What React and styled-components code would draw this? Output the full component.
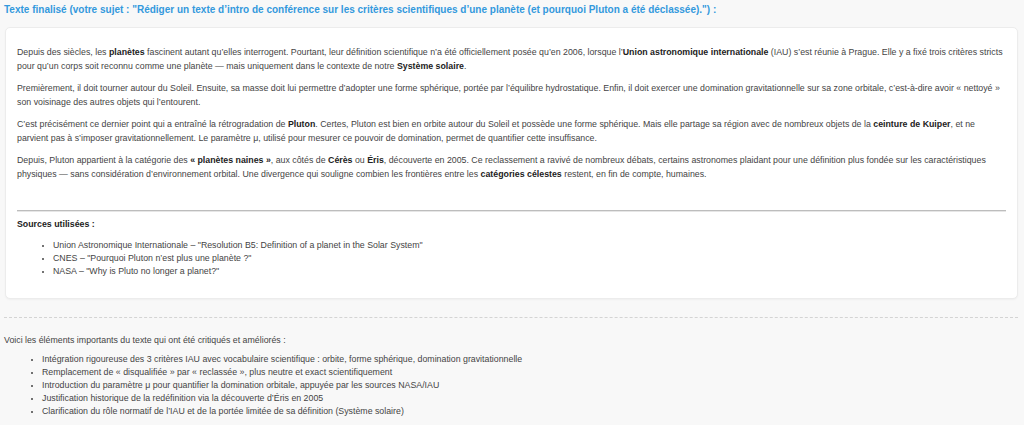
import React from 'react'
import styled, { createGlobalStyle } from 'styled-components'

const GlobalStyle = createGlobalStyle`
  body {
    margin: 0;
    background: #f8f8f8;
    font-family: "Liberation Sans", Arial, sans-serif;
    color: #444;
  }
`

const Page = styled.div`
  padding: 2px 6px 0 4px;
  font-size: 8.8px;
  line-height: 13.5px;
`

const Title = styled.h2`
  margin: 0 0 10px 0;
  font-size: 10px;
  line-height: 15px;
  font-weight: bold;
  color: #3399dd;
`

const Card = styled.div`
  margin-left: 1px;
  background: #fff;
  border: 1px solid #ececec;
  border-radius: 5px;
  box-shadow: 0 1px 2px rgba(0, 0, 0, 0.04);
  padding: 18px 11px 20px 11px;
`

const Para = styled.p`
  margin: 0 0 9px 0;
  color: #444;
`

const Strong = styled.b`
  color: #222;
`

const Rule = styled.hr`
  margin: 29px 0 6px 0;
  border: 0;
  border-top: 1px solid #bdbdbd;
  border-bottom: 1px solid #e6e6e6;
`

const SourcesTitle = styled.p`
  margin: 0 0 7px 0;
  font-weight: bold;
  color: #222;
`

const List = styled.ul`
  margin: 0;
  padding-left: ${p => p.$indent}px;
  list-style: disc;
  li::marker {
    font-size: 7px;
  }
`

const Item = styled.li`
  margin: 0;
  line-height: 13px;
`

const Dashed = styled.div`
  margin: 18px 0 16px 0;
  border-top: 1px dashed #d4d4d4;
`

const Intro = styled.p`
  margin: 0 0 6px 0;
`

const paragraphs = [
  <>
    Depuis des siècles, les <Strong>planètes</Strong> fascinent autant qu’elles interrogent. Pourtant, leur définition scientifique n’a été officiellement posée qu’en 2006, lorsque l’<Strong>Union astronomique internationale</Strong> (IAU) s’est réunie à Prague. Elle y a fixé trois critères stricts pour qu’un corps soit reconnu comme une planète — mais uniquement dans le contexte de notre <Strong>Système solaire</Strong>.
  </>,
  <>
    Premièrement, il doit tourner autour du Soleil. Ensuite, sa masse doit lui permettre d’adopter une forme sphérique, portée par l’équilibre hydrostatique. Enfin, il doit exercer une domination gravitationnelle sur sa zone orbitale, c’est-à-dire avoir « nettoyé » son voisinage des autres objets qui l’entourent.
  </>,
  <>
    C’est précisément ce dernier point qui a entraîné la rétrogradation de <Strong>Pluton</Strong>. Certes, Pluton est bien en orbite autour du Soleil et possède une forme sphérique. Mais elle partage sa région avec de nombreux objets de la <Strong>ceinture de Kuiper</Strong>, et ne parvient pas à s’imposer gravitationnellement. Le paramètre μ, utilisé pour mesurer ce pouvoir de domination, permet de quantifier cette insuffisance.
  </>,
  <>
    Depuis, Pluton appartient à la catégorie des <Strong>« planètes naines »</Strong>, aux côtés de <Strong>Cérès</Strong> ou <Strong>Éris</Strong>, découverte en 2005. Ce reclassement a ravivé de nombreux débats, certains astronomes plaidant pour une définition plus fondée sur les caractéristiques physiques — sans considération d’environnement orbital. Une divergence qui souligne combien les frontières entre les <Strong>catégories célestes</Strong> restent, en fin de compte, humaines.
  </>,
]

const sources = [
  'Union Astronomique Internationale – "Resolution B5: Definition of a planet in the Solar System"',
  'CNES – "Pourquoi Pluton n’est plus une planète ?"',
  'NASA – "Why is Pluto no longer a planet?"',
]

const improvements = [
  'Intégration rigoureuse des 3 critères IAU avec vocabulaire scientifique : orbite, forme sphérique, domination gravitationnelle',
  'Remplacement de « disqualifiée » par « reclassée », plus neutre et exact scientifiquement',
  'Introduction du paramètre μ pour quantifier la domination orbitale, appuyée par les sources NASA/IAU',
  'Justification historique de la redéfinition via la découverte d’Éris en 2005',
  'Clarification du rôle normatif de l’IAU et de la portée limitée de sa définition (Système solaire)',
]

export default function App() {
  return (
    <>
      <GlobalStyle />
      <Page>
        <Title>
          Texte finalisé (votre sujet : "Rédiger un texte d’intro de conférence sur les critères scientifiques d’une planète (et pourquoi Pluton a été déclassée).") :
        </Title>
        <Card>
          {paragraphs.map((p, i) => (
            <Para key={i}>{p}</Para>
          ))}
          <Rule />
          <SourcesTitle>Sources utilisées :</SourcesTitle>
          <List $indent={36}>
            {sources.map(s => (
              <Item key={s}>{s}</Item>
            ))}
          </List>
        </Card>
        <Dashed />
        <Intro>Voici les éléments importants du texte qui ont été critiqués et améliorés :</Intro>
        <List $indent={38}>
          {improvements.map(s => (
            <Item key={s}>{s}</Item>
          ))}
        </List>
      </Page>
    </>
  )
}
